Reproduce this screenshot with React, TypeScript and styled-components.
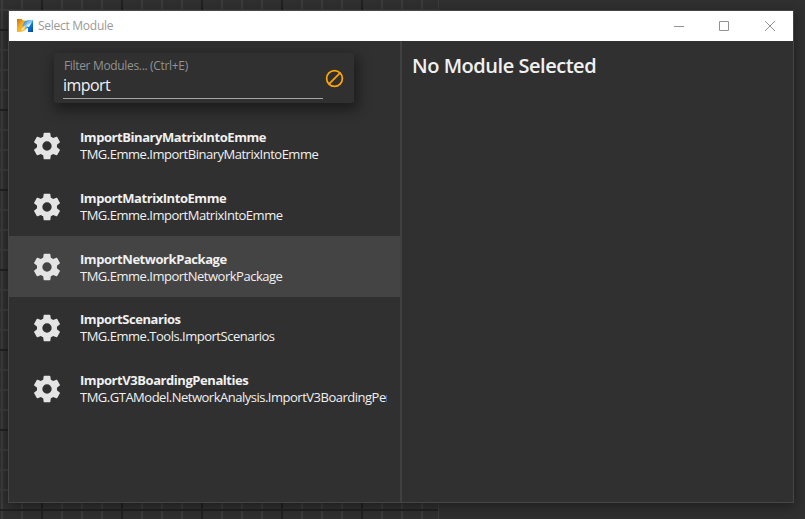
import React from "react";
import styled, { createGlobalStyle } from "styled-components";

const GlobalStyle = createGlobalStyle`
  * { box-sizing: border-box; }
  body { margin: 0; background: #303030; overflow: hidden; }
`;

const Workspace = styled.div`
  width: 805px;
  height: 519px;
  padding: 10px 11px 16px 8px;
  overflow: hidden;
  font-family: "Open Sans", "Noto Sans", sans-serif;
  color: #f0f0f0;
  background-color: #303030;
  background-image:
    linear-gradient(#3c3c3c, #3c3c3c),
    repeating-linear-gradient(90deg, #212121 0 2px, transparent 2px 80px),
    repeating-linear-gradient(180deg, #212121 0 2px, transparent 2px 80px),
    repeating-linear-gradient(90deg, #3c3c3c 0 2px, transparent 2px 20px),
    repeating-linear-gradient(180deg, #3c3c3c 0 2px, transparent 2px 20px);
  background-size: 1px 519px, 477px 600px, 438px 600px, 437px 600px, 438px 600px;
  background-position: 438px 0, -39px 0, 0 -51px, 1px 0, 0 -11px;
  background-repeat: no-repeat;
`;

const Dialog = styled.main`
  display: flex;
  flex-direction: column;
  height: 493px;
  border: 1px solid #464646;
  background: #303030;
  box-shadow: 0 3px 12px rgba(0, 0, 0, 0.42);
`;

const TitleBar = styled.header`
  display: flex;
  align-items: center;
  flex: 0 0 30px;
  padding-left: 8px;
  background: #fff;
  color: #999;
`;

const WindowTitle = styled.span`
  flex: 1;
  margin-left: 5px;
  font-size: 12px;
  line-height: 18px;
  letter-spacing: -0.27px;
`;

const CaptionButton = styled.button`
  display: grid;
  place-items: center;
  width: 45.5px;
  height: 30px;
  padding: 0;
  border: 0;
  background: none;
  color: #929292;
`;

const Content = styled.div`
  display: grid;
  grid-template-columns: 393px 1fr;
  flex: 1;
  min-height: 0;
`;

const ModulePane = styled.section`
  min-width: 0;
  padding-top: 12px;
  border-right: 2px solid #404040;
  overflow: hidden;
`;

const FilterCard = styled.div`
  display: flex;
  align-items: center;
  width: 300px;
  height: 50px;
  margin-left: 45px;
  padding-left: 9px;
  border-radius: 2px;
  background: #303030;
  box-shadow: 2px 5px 13px 2px rgba(0, 0, 0, 0.43);
`;

const Field = styled.label`
  display: flex;
  flex-direction: column;
  width: 260px;
  height: 46px;
  padding-top: 4px;
  border-bottom: 1px solid #a5a5a5;
  margin-bottom: 4px;
`;

const FieldLabel = styled.span`
  font-size: 12px;
  line-height: 17px;
  color: #929292;
  letter-spacing: -0.33px;
  padding-left: 1px;
`;

const FieldInput = styled.input`
  width: 100%;
  height: 22px;
  padding: 0;
  border: 0;
  outline: 0;
  background: none;
  color: #f2f2f2;
  font: 16px/22px "Open Sans", sans-serif;
  letter-spacing: -0.55px;
`;

const ClearButton = styled.button`
  display: grid;
  place-items: center;
  width: 21px;
  height: 21px;
  margin-left: 1px;
  padding: 0;
  border: 0;
  background: none;
  color: #ffa500;
`;

const ModuleList = styled.ul`
  margin: 12px 0 0;
  padding: 0;
  list-style: none;
`;

const ModuleRow = styled.li<{ $active: boolean }>`
  display: flex;
  align-items: center;
  height: 60.6px;
  padding: 0 13px 0 22px;
  background: ${({ $active }) => ($active ? "#444" : "transparent")};
`;

const GearIcon = styled.svg`
  flex: none;
  width: 32px;
  height: 32px;
  margin: 2px 17px 0 0;
  fill: #e4e4e4;
`;

const ModuleText = styled.div`
  min-width: 0;
  flex: 1;
  overflow: hidden;
  white-space: nowrap;
  font-size: 13px;
  margin-top: 1.6px;
`;

const ModuleName = styled.div`
  line-height: 18px;
  font-weight: 700;
  letter-spacing: -0.44px;
`;

const ModulePath = styled.div`
  line-height: 17.4px;
  letter-spacing: -0.49px;
`;

const DetailPane = styled.section`
  padding: 11px 10px;
`;

const DetailHeading = styled.h1`
  margin: 0;
  font-size: 20px;
  line-height: 28px;
  font-weight: 600;
  letter-spacing: -0.47px;
`;

const modules = [
  { name: "ImportBinaryMatrixIntoEmme", path: "TMG.Emme.ImportBinaryMatrixIntoEmme" },
  { name: "ImportMatrixIntoEmme", path: "TMG.Emme.ImportMatrixIntoEmme" },
  { name: "ImportNetworkPackage", path: "TMG.Emme.ImportNetworkPackage" },
  { name: "ImportScenarios", path: "TMG.Emme.Tools.ImportScenarios" },
  { name: "ImportV3BoardingPenalties", path: "TMG.GTAModel.NetworkAnalysis.ImportV3BoardingPenalties" },
];

const Gear = () => (
  <GearIcon viewBox="0 0 24 24">
    <path d="M12,15.5A3.5,3.5 0 0,1 8.5,12A3.5,3.5 0 0,1 12,8.5A3.5,3.5 0 0,1 15.5,12A3.5,3.5 0 0,1 12,15.5M19.43,12.97C19.47,12.65 19.5,12.33 19.5,12C19.5,11.67 19.47,11.34 19.43,11L21.54,9.37C21.73,9.22 21.78,8.95 21.66,8.73L19.66,5.27C19.54,5.05 19.27,4.96 19.05,5.05L16.56,6.05C16.04,5.66 15.5,5.32 14.87,5.07L14.5,2.42C14.46,2.18 14.25,2 14,2H10C9.75,2 9.54,2.18 9.5,2.42L9.13,5.07C8.5,5.32 7.96,5.66 7.44,6.05L4.95,5.05C4.73,4.96 4.46,5.05 4.34,5.27L2.34,8.73C2.21,8.95 2.27,9.22 2.46,9.37L4.57,11C4.53,11.34 4.5,11.67 4.5,12C4.5,12.33 4.53,12.65 4.57,12.97L2.46,14.63C2.27,14.78 2.21,15.05 2.34,15.27L4.34,18.73C4.46,18.95 4.73,19.03 4.95,18.95L7.44,17.94C7.96,18.34 8.5,18.68 9.13,18.93L9.5,21.58C9.54,21.82 9.75,22 10,22H14C14.25,22 14.46,21.82 14.5,21.58L14.87,18.93C15.5,18.67 16.04,18.34 16.56,17.94L19.05,18.95C19.27,19.03 19.54,18.95 19.66,18.73L21.66,15.27C21.78,15.05 21.73,14.78 21.54,14.63L19.43,12.97Z" />
  </GearIcon>
);

const AppLogo = () => (
  <svg width="16" height="16" viewBox="0 0 16 16">
    <defs>
      <linearGradient id="amber" x1="0" y1="0" x2="0.7" y2="1">
        <stop offset="0" stopColor="#b87512" />
        <stop offset="0.45" stopColor="#f5a51b" />
        <stop offset="1" stopColor="#ffc94a" />
      </linearGradient>
      <linearGradient id="azure" x1="0" y1="0" x2="1" y2="1">
        <stop offset="0" stopColor="#0a4fa8" />
        <stop offset="0.45" stopColor="#8fd5fa" />
        <stop offset="0.6" stopColor="#1579d4" />
        <stop offset="1" stopColor="#06439d" />
      </linearGradient>
    </defs>
    <path d="M0 1H5V2L9 3V8L5 9.5L9 9V12L4 14H0Z" fill="url(#amber)" />
    <path d="M8 3L12 2H16V14H11V10L8 11V8L5 8.5Z" fill="url(#azure)" />
    <path d="M9 8L15 4L12 9Z" fill="#d9f3ff" />
    <path d="M4 11L8 9L6 12Z" fill="#fff0bd" />
  </svg>
);

export default function App() {
  return (
    <>
      <GlobalStyle />
      <Workspace>
        <Dialog>
          <TitleBar>
            <AppLogo />
            <WindowTitle>Select Module</WindowTitle>
            <CaptionButton aria-label="Minimize">
              <svg width="10" height="10"><path d="M0 5.5H10" stroke="currentColor" /></svg>
            </CaptionButton>
            <CaptionButton aria-label="Maximize">
              <svg width="11" height="10"><path d="M.5 .5H9.5V9.5H.5Z" fill="none" stroke="currentColor" /></svg>
            </CaptionButton>
            <CaptionButton aria-label="Close">
              <svg width="10" height="10"><path d="M0 0L10 10M10 0L0 10" stroke="currentColor" /></svg>
            </CaptionButton>
          </TitleBar>
          <Content>
            <ModulePane>
              <FilterCard>
                <Field>
                  <FieldLabel>Filter Modules... (Ctrl+E)</FieldLabel>
                  <FieldInput defaultValue="import" />
                </Field>
                <ClearButton aria-label="Clear filter">
                  <svg width="21" height="21" viewBox="0 0 24 24" fill="none" stroke="currentColor" strokeWidth="2">
                    <circle cx="12" cy="12" r="9" />
                    <path d="M18.4 5.6L5.6 18.4" />
                  </svg>
                </ClearButton>
              </FilterCard>
              <ModuleList>
                {modules.map((m, i) => (
                  <ModuleRow key={m.name} $active={i === 2}>
                    <Gear />
                    <ModuleText>
                      <ModuleName>{m.name}</ModuleName>
                      <ModulePath>{m.path}</ModulePath>
                    </ModuleText>
                  </ModuleRow>
                ))}
              </ModuleList>
            </ModulePane>
            <DetailPane>
              <DetailHeading>No Module Selected</DetailHeading>
            </DetailPane>
          </Content>
        </Dialog>
      </Workspace>
    </>
  );
}
